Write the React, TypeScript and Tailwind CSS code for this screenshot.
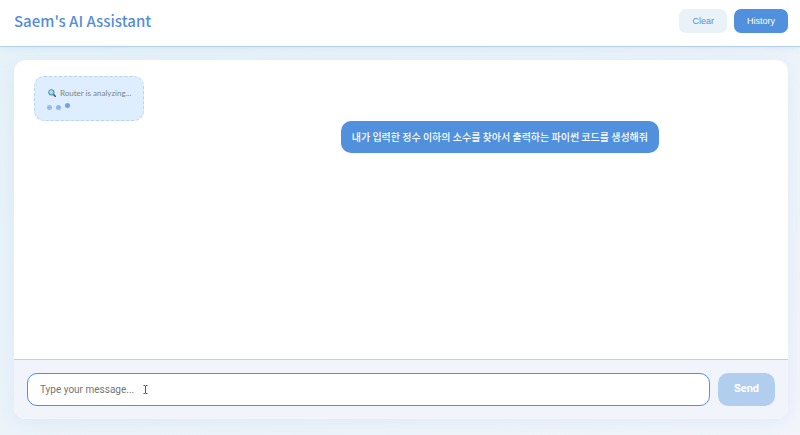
import React, { useState } from "react";

type Message = {
  id: number;
  text: string;
};

const initialMessages: Message[] = [
  {
    id: 1,
    text: "내가 입력한 정수 이하의 소수를 찾아서 출력하는 파이썬 코드를 생성해줘",
  },
];

const SearchIcon = () => (
  <svg viewBox="0 0 16 16" className="w-2 h-2 shrink-0" aria-hidden="true">
    <path d="M10.5 10.5l4 4" stroke="#5b3568" strokeWidth="3" strokeLinecap="round" />
    <circle cx="6.8" cy="6.8" r="5.4" fill="#9adcea" stroke="#3a7f9f" strokeWidth="2" />
    <path d="M4 6.5a3 3 0 0 1 3-3" fill="none" stroke="#ecfbff" strokeWidth="1.6" />
  </svg>
);

const TextCursor = () => (
  <svg
    viewBox="0 0 5 9"
    className="absolute left-[116px] top-3 w-[5px] h-[9px] pointer-events-none"
    fill="none"
    stroke="#555555"
    aria-hidden="true"
  >
    <path d="M0.5 0.5h1.5l.5.5.5-.5h1.5M2.5 1v7M0.5 8.5h1.5l.5-.5.5.5h1.5" />
  </svg>
);

const RouterStatus = () => (
  <div
    role="status"
    className="self-start flex flex-col gap-1 h-[45px] px-3 pt-[10px] rounded-[10px] border border-dashed border-[#b5d6ee] bg-[#dfeeff]"
  >
    <div className="flex items-center gap-1 h-3 pl-px font-['Lato',sans-serif] text-[8px] leading-3 text-[#7c8583]">
      <SearchIcon />
      <span>Router is analyzing...</span>
    </div>
    <div className="flex gap-1">
      <span className="w-[5px] h-[5px] mt-[2px] rounded-full bg-[#94bdee]" />
      <span className="w-[5px] h-[5px] mt-[2px] rounded-full bg-[#8cb7ec]" />
      <span className="w-[5px] h-[5px] rounded-full bg-[#6ea4e6]" />
    </div>
  </div>
);

const App: React.FC = () => {
  const [messages, setMessages] = useState<Message[]>(initialMessages);
  const [input, setInput] = useState("");

  const handleSubmit = (e: React.FormEvent) => {
    e.preventDefault();
    if (!input.trim()) return;
    setMessages([...messages, { id: Date.now(), text: input }]);
    setInput("");
  };

  return (
    <div className="min-h-screen flex flex-col bg-linear-to-br from-[#e6f2f8] to-[#f3f5fb] font-['Noto_Sans_CJK_KR',sans-serif]">
      <header className="flex items-center justify-between pl-[14px] pr-3 h-[47px] pb-1 bg-white border-b border-[#b3cfe9] shadow-[0_1px_8px_rgba(74,144,226,0.12)]">
        <h1 className="text-[15px] leading-5 font-medium text-[#558fd8]">
          Saem's AI Assistant
        </h1>
        <div className="flex gap-[7px] font-['Liberation_Sans',sans-serif] text-[9px] leading-3">
          <button
            type="button"
            onClick={() => setMessages([])}
            className="h-6 px-[13px] rounded-[7px] bg-[#e9f2f9] text-[#5b8bd2]"
          >
            Clear
          </button>
          <button type="button" className="h-6 px-[13px] rounded-[7px] bg-[#5090dc] text-white">
            History
          </button>
        </div>
      </header>

      <main className="flex-1 flex flex-col pl-[14px] pr-3 pt-[13px] pb-4">
        <section className="flex-1 flex flex-col rounded-xl overflow-hidden bg-white shadow-[0_4px_20px_rgba(74,144,226,0.1)]">
          <div className="flex-1 flex flex-col pl-5 pr-[129px] pt-4">
            <RouterStatus />
            {messages.map(({ id, text }) => (
              <p
                key={id}
                className="self-end px-[11px] py-2 rounded-[10px] bg-[#5090dc] text-[10px] leading-4 font-medium text-white"
              >
                {text}
              </p>
            ))}
          </div>

          <form
            onSubmit={handleSubmit}
            className="flex gap-2 px-[13px] py-[13px] h-[60px] border-t border-[#b5d2e8] bg-[#f2f4fb] font-['Roboto',sans-serif]"
          >
            <div className="relative flex-1 flex">
              <input
                type="text"
                aria-label="Message"
                value={input}
                onChange={(e) => setInput(e.target.value)}
                placeholder="Type your message..."
                className="w-full px-3 pb-px rounded-[10px] border border-[#5090dc] bg-white text-[10px] text-[#333333] placeholder:text-[#757575] outline-none"
              />
              <TextCursor />
            </div>
            <button
              type="submit"
              className="w-[57px] rounded-[10px] bg-[#b2ceef] text-[11px] font-bold text-white"
            >
              Send
            </button>
          </form>
        </section>
      </main>
    </div>
  );
};

export default App;
